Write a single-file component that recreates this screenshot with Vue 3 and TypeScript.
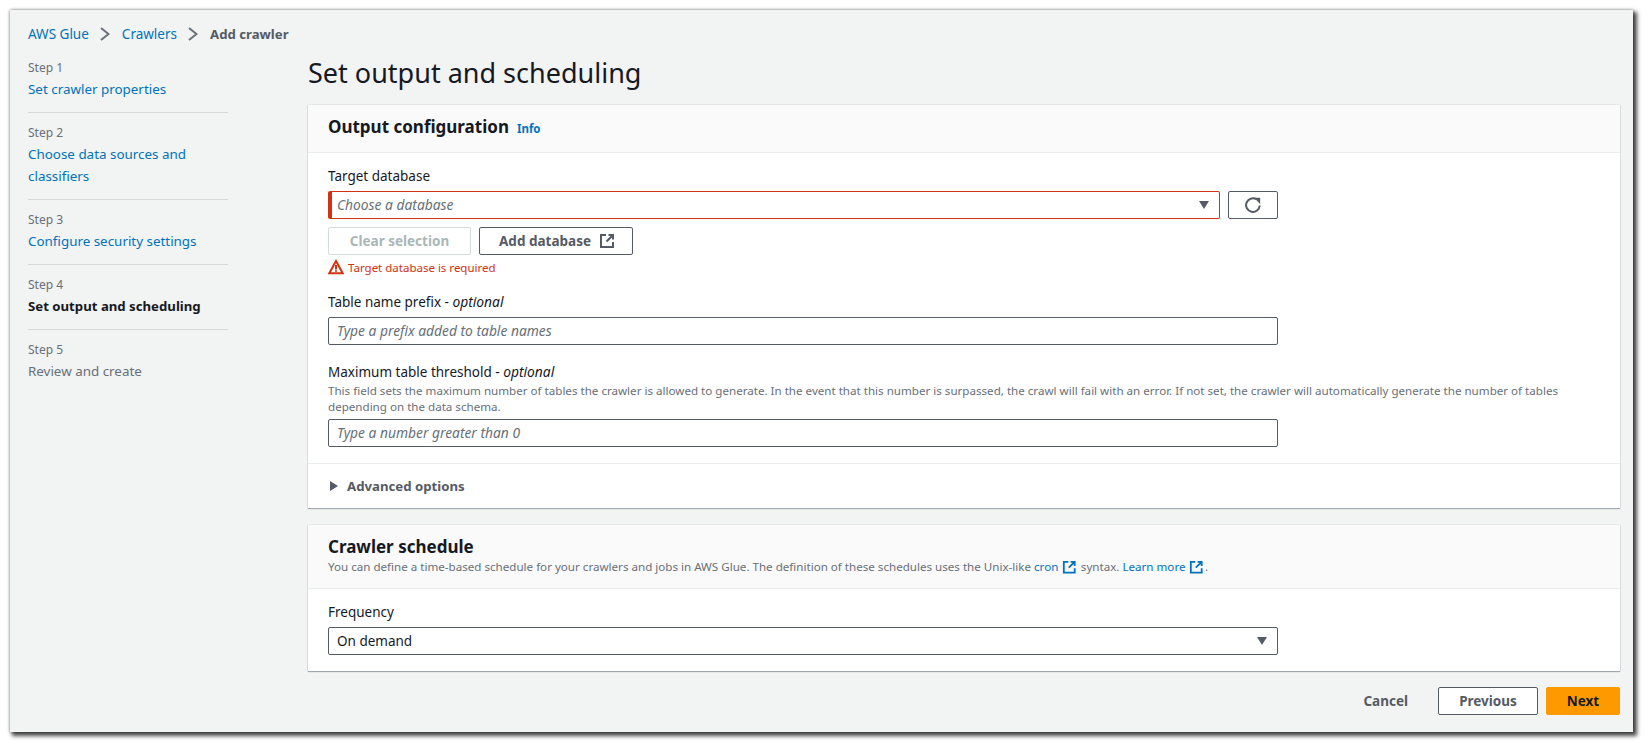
<template>
    <div class="stage">
        <div class="window">
            <nav class="crumbs">
                <a>AWS Glue</a>
                <svg class="crumb-sep" viewBox="0 0 10 14"><path d="M1 1 8.5 7 1 13" /></svg>
                <a>Crawlers</a>
                <svg class="crumb-sep" viewBox="0 0 10 14"><path d="M1 1 8.5 7 1 13" /></svg>
                <span class="crumb-current">Add crawler</span>
            </nav>

            <div class="shell">
                <ul class="steps">
                    <li v-for="step in steps" :key="step.num" class="step">
                        <small>Step {{ step.num }}</small>
                        <span :class="['step-name', step.state]">{{ step.name }}</span>
                    </li>
                </ul>

                <main class="main">
                    <h1>Set output and scheduling</h1>

                    <section class="panel">
                        <header class="panel-head head-one">
                            <h2>Output configuration</h2>
                            <a class="info">Info</a>
                        </header>
                        <div class="panel-body body-one">
                            <label class="field-label">Target database</label>
                            <div class="select-row">
                                <div class="select select-error">
                                    <i>Choose a database</i>
                                    <span class="caret"></span>
                                </div>
                                <button class="btn btn-icon" type="button">
                                    <svg viewBox="0 0 16 16" class="icon"><path d="M14.7 8.5A6.8 6.8 0 1 1 11.3 2.2" /><path class="solid" d="M9 .8h6.2V7z" /></svg>
                                </button>
                            </div>
                            <div class="btn-row">
                                <button class="btn btn-disabled" type="button">Clear selection</button>
                                <button class="btn btn-add" type="button">
                                    Add database
                                    <svg viewBox="0 0 16 16" class="icon"><path d="M7 2H2v12h12V9" /><path d="M9.5 2H14v4.5M14 2 7.5 8.5" /></svg>
                                </button>
                            </div>
                            <div class="error">
                                <svg viewBox="0 0 16 16" class="warn"><path d="M8 2 1.3 14.2h13.4z" /><path d="M8 6v4.4M8 11.2v1.6" /></svg>
                                Target database is required
                            </div>

                            <label class="field-label label-gap">Table name prefix - <em>optional</em></label>
                            <div class="input input-near"><i>Type a prefix added to table names</i></div>

                            <label class="field-label label-gap-lg">Maximum table threshold - <em>optional</em></label>
                            <p class="hint">This field sets the maximum number of tables the crawler is allowed to generate. In the event that this number is surpassed, the crawl will fail with an error. If not set, the crawler will automatically generate the number of tables depending on the data schema.</p>
                            <div class="input input-near"><i>Type a number greater than 0</i></div>
                        </div>
                        <div class="advanced">
                            <span class="tri"></span>
                            Advanced options
                        </div>
                    </section>

                    <section class="panel panel-two">
                        <header class="panel-head head-two">
                            <h2>Crawler schedule</h2>
                            <p class="sub">
                                You can define a time-based schedule for your crawlers and jobs in AWS Glue. The definition of these schedules uses the Unix-like
                                <a>cron</a>
                                <svg viewBox="0 0 16 16" class="icon ext"><path d="M7 2H2v12h12V9" /><path d="M9.5 2H14v4.5M14 2 7.5 8.5" /></svg>
                                syntax. <a>Learn more</a>
                                <svg viewBox="0 0 16 16" class="icon ext"><path d="M7 2H2v12h12V9" /><path d="M9.5 2H14v4.5M14 2 7.5 8.5" /></svg>.
                            </p>
                        </header>
                        <div class="panel-body body-two">
                            <label class="field-label">Frequency</label>
                            <div class="select select-full">
                                <span>On demand</span>
                                <span class="caret"></span>
                            </div>
                        </div>
                    </section>

                    <footer class="actions">
                        <span class="cancel">Cancel</span>
                        <button class="btn btn-prev" type="button">Previous</button>
                        <button class="btn btn-next" type="button">Next</button>
                    </footer>
                </main>
            </div>
        </div>
    </div>
</template>

<script setup lang="ts">
interface Step {
    num: number;
    name: string;
    state: "link" | "current" | "todo";
}

const steps: Step[] = [
    { num: 1, name: "Set crawler properties", state: "link" },
    { num: 2, name: "Choose data sources and classifiers", state: "link" },
    { num: 3, name: "Configure security settings", state: "link" },
    { num: 4, name: "Set output and scheduling", state: "current" },
    { num: 5, name: "Review and create", state: "todo" },
];
</script>

<style>
html,
body {
    margin: 0;
    background: #fff;
}
</style>

<style scoped>
.stage {
    box-sizing: border-box;
    width: 1651px;
    height: 750px;
    padding: 10px 18px 18px 10px;
    background: #fff;
    overflow: hidden;
}

.window {
    box-sizing: border-box;
    width: 1623px;
    height: 722px;
    padding: 0 12px 0 18px;
    background: #f2f3f3;
    box-shadow: 0 0 3px rgba(0, 0, 0, 0.45), 3px 3px 4px 1px rgba(0, 0, 0, 0.7);
    font-family: "Noto Sans", "Open Sans", sans-serif;
    font-size: 13.5px;
    color: #16191f;
}

a {
    color: #0073bb;
}

.crumbs {
    display: flex;
    align-items: center;
    height: 48px;
    font-size: 13.5px;
}

.crumb-sep {
    width: 10px;
    height: 14px;
    margin: 0 12px 0 11px;
    fill: none;
    stroke: #687078;
    stroke-width: 2;
}

.crumb-current {
    font-weight: 700;
    font-size: 13.2px;
    color: #545b64;
}

.shell {
    display: flex;
    gap: 80px;
}

.steps {
    width: 200px;
    margin: 0;
    padding: 0;
    list-style: none;
}

.step {
    padding-bottom: 12px;
    margin-bottom: 10px;
    border-bottom: 1px solid #d5dbdb;
}

.step:last-child {
    border-bottom: 0;
}

.step small {
    display: block;
    font-size: 12px;
    line-height: 20px;
    color: #687078;
}

.step-name {
    display: block;
    line-height: 22px;
    font-size: 13.4px;
}

.step-name.link {
    color: #0073bb;
}

.step-name.current {
    font-weight: 700;
    font-size: 13.2px;
}

.step-name.todo {
    color: #687078;
}

.main {
    width: 1312px;
}

h1 {
    margin: 0;
    height: 47px;
    font-size: 27px;
    font-weight: 400;
    line-height: 30px;
}

.panel {
    background: #fff;
    box-shadow: 0 1px 1px rgba(0, 22, 44, 0.3), 0 0 1px rgba(0, 22, 44, 0.3);
}

.panel-two {
    margin-top: 17px;
}

.panel-head {
    box-sizing: border-box;
    padding: 0 20px;
    background: #fafafa;
    border-bottom: 1px solid #eaeded;
}

.head-one {
    display: flex;
    align-items: baseline;
    gap: 8px;
    height: 48px;
    padding-top: 11px;
}

.head-two {
    height: 64px;
    padding-top: 11px;
}

h2 {
    margin: 0;
    font-size: 17px;
    line-height: 22px;
    font-weight: 700;
}

.info {
    font-size: 11.5px;
    font-weight: 700;
}

.sub {
    margin: 0;
    font-size: 11.6px;
    line-height: 18px;
    color: #687078;
}

.panel-body {
    padding: 0 20px;
}

.body-one {
    height: 311px;
    padding-top: 12px;
    box-sizing: border-box;
    border-bottom: 1px solid #eaeded;
}

.body-two {
    height: 82px;
    padding-top: 12px;
    box-sizing: border-box;
}

.field-label {
    display: block;
    line-height: 22px;
}

.field-label em {
    font-size: 13.8px;
}

.label-gap {
    margin-top: 14px;
}

.label-gap-lg {
    margin-top: 17px;
    line-height: 20px;
}

.select-row {
    display: flex;
    gap: 8px;
    margin-top: 4px;
}

.select,
.input {
    box-sizing: border-box;
    display: flex;
    align-items: center;
    justify-content: space-between;
    height: 28px;
    padding: 0 10px 0 8px;
    background: #fff;
    border: 1px solid #545b64;
    border-radius: 2px;
    font-size: 13.5px;
}

.select i,
.input i {
    font-size: 13.8px;
    line-height: 24px;
    color: #687078;
}

.select-error {
    width: 892px;
    border-color: #d13212;
    border-left: 4px solid #d13212;
    padding-left: 5px;
}

.select-full,
.input {
    width: 950px;
}

.select-full {
    margin-top: 4px;
}

.caret {
    width: 0;
    height: 0;
    border-left: 5.5px solid transparent;
    border-right: 5.5px solid transparent;
    border-top: 8px solid #545b64;
}

.btn {
    box-sizing: border-box;
    display: inline-flex;
    align-items: center;
    justify-content: center;
    height: 28px;
    padding: 0;
    background: #fff;
    border: 1px solid #545b64;
    border-radius: 2px;
    font-family: inherit;
    font-size: 13.5px;
    font-weight: 700;
    color: #545b64;
}

.btn-icon {
    width: 50px;
}

.icon {
    width: 16px;
    height: 16px;
    fill: none;
    stroke: #545b64;
    stroke-width: 2;
}

.icon .solid {
    fill: #545b64;
    stroke: none;
}

.btn-row {
    display: flex;
    gap: 8px;
    margin-top: 8px;
}

.btn-disabled {
    width: 143px;
    border-color: #d5dbdb;
    color: #aab7b8;
}

.btn-add {
    width: 154px;
    gap: 8px;
    padding-left: 2px;
}

.error {
    display: flex;
    align-items: center;
    gap: 4px;
    margin-top: 2px;
    height: 20px;
    font-size: 11.5px;
    color: #d13212;
}

.warn {
    width: 16px;
    height: 16px;
    fill: none;
    stroke: #d13212;
    stroke-width: 2;
}

.input-near {
    margin-top: 4px;
}

.hint {
    margin: 1px 0;
    font-size: 11.6px;
    line-height: 16px;
    color: #687078;
}

.advanced {
    box-sizing: border-box;
    display: flex;
    align-items: center;
    gap: 9px;
    height: 44px;
    padding: 0 22px;
    font-size: 13.2px;
    font-weight: 700;
    color: #545b64;
}

.tri {
    width: 0;
    height: 0;
    border-top: 5.5px solid transparent;
    border-bottom: 5.5px solid transparent;
    border-left: 8px solid #545b64;
}

.ext {
    width: 14.5px;
    height: 14.5px;
    stroke: #0073bb;
    vertical-align: -3px;
    margin: 0 1px 0 4px;
}

.actions {
    display: flex;
    align-items: center;
    justify-content: flex-end;
    margin-top: 16px;
}

.cancel {
    margin-right: 30px;
    font-weight: 700;
    color: #545b64;
}

.btn-prev {
    width: 100px;
    margin-right: 8px;
}

.btn-next {
    width: 74px;
    background: #ff9900;
    border-color: #ff9900;
    color: #16191f;
}
</style>
